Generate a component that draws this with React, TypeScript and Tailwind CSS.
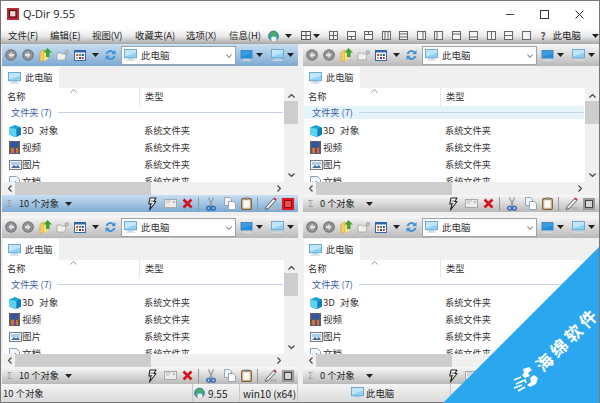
import React from "react";

const cjk = { fontFamily: '"Noto Sans CJK SC", "Noto Sans", sans-serif' };

function Svg({ w = 14, h = 14, vb = "0 0 14 14", children }: { w?: number; h?: number; vb?: string; children: React.ReactNode }) {
  return (
    <svg width={w} height={h} viewBox={vb} className="shrink-0 block">
      {children}
    </svg>
  );
}

const Caret = ({ c = "#222" }: { c?: string }) => (
  <Svg w={7} h={4} vb="0 0 7 4">
    <path d="M0 0h7L3.5 4z" fill={c} />
  </Svg>
);

const Monitor = ({ w = 14, h = 13, screen = "#2a9be0", light = false }: { w?: number; h?: number; screen?: string; light?: boolean }) => (
  <Svg w={w} h={h} vb="0 0 14 13">
    <rect x="0.5" y="0.5" width="13" height="9" fill={light ? "#8fd0f5" : screen} stroke={light ? "#6aa6cc" : "#3b7fb6"} />
    <path d="M1 1h12v3L1 8z" fill="#fff" opacity={light ? 0.45 : 0.12} />
    <rect x="4" y="10" width="6" height="1.5" fill="#a9c6da" />
    <rect x="2" y="11.4" width="10" height="1.4" fill="#d5dfe7" />
  </Svg>
);

const Round = ({ dir }: { dir: "l" | "r" }) => (
  <Svg w={12} h={12} vb="0 0 12 12">
    <circle cx="6" cy="6" r="5.8" fill="#6d6f73" />
    <circle cx="6" cy="6" r="4.8" fill="#909296" />
    <path d={dir === "l" ? "M6.6 2.8 3.4 6l3.2 3.2V7.2H9V4.8H6.6z" : "M5.4 2.8 8.6 6 5.4 9.2V7.2H3V4.8h2.4z"} fill="#e4e4e4" />
  </Svg>
);

const UpFolder = () => (
  <Svg w={13} h={14} vb="0 0 13 14">
    <path d="M1 4l4-2v10l-4 2z" fill="#f3cf5e" stroke="#c99c2d" strokeWidth=".6" />
    <path d="M5 3h4v8l-4 2z" fill="#f8e08a" />
    <path d="M8.5 0 13 4.5h-2.5V9H7V4.5H4.5z" fill="#45a12f" />
  </Svg>
);

const FolderPin = () => (
  <Svg w={13} h={11} vb="0 0 13 11">
    <path d="M1 3h4l1 1h4l-1 6H1z" fill="#f1f1ec" stroke="#9c9c94" strokeWidth=".7" />
    <circle cx="10.8" cy="2.2" r="1.6" fill="#d0d0d0" stroke="#777" strokeWidth=".6" />
  </Svg>
);

const ViewIcon = () => (
  <Svg w={12} h={11} vb="0 0 12 11">
    <rect x=".5" y=".5" width="11" height="10" fill="#fff" stroke="#2f66ad" />
    <rect x=".5" y=".5" width="11" height="2" fill="#2f66ad" />
    <rect x="2.2" y="4" width="2" height="2" fill="#d33" />
    <rect x="5" y="4" width="2" height="2" fill="#3a3" />
    <rect x="7.8" y="4" width="2" height="2" fill="#24b" />
    <rect x="2.2" y="7" width="2" height="2" fill="#e9a51f" />
    <rect x="5" y="7" width="2" height="2" fill="#24b" />
    <rect x="7.8" y="7" width="2" height="2" fill="#d33" />
  </Svg>
);

const Refresh = () => (
  <Svg w={13} h={12} vb="0 0 13 12">
    <path d="M1.5 5A5 5 0 0 1 10 2.5L11.5 1v4.3H7.3l1.3-1.4A3 3 0 0 0 3.7 5z" fill="#3f93d8" />
    <path d="M11.5 7A5 5 0 0 1 3 9.5L1.5 11V6.7h4.2L4.4 8.1A3 3 0 0 0 9.3 7z" fill="#3f93d8" />
  </Svg>
);

const Globe = ({ s = 11 }: { s?: number }) => (
  <Svg w={s} h={s + 1} vb="0 0 11 12">
    <circle cx="5.5" cy="6" r="5" fill="#3e9fb8" stroke="#38606c" strokeWidth=".6" />
    <path d="M3 2.4 7 1.8 8 4.5 5.8 6 6.4 8 4.6 8.6 2.6 5.2z" fill="#4caf50" />
    <ellipse cx="5.8" cy="9" rx="2.6" ry="2.4" fill="#f4f4f4" />
  </Svg>
);

const Bolt = () => (
  <Svg w={10} h={14} vb="0 0 10 14">
    <path d="M3 1h6L6.8 4.5H9L2.5 13l1.6-6H1.8z" fill="#fff" stroke="#222" strokeWidth="1.1" strokeLinejoin="round" />
    <path d="M3.4 4h3M3 6.3h2.5" stroke="#222" strokeWidth=".7" />
  </Svg>
);

const Mail = () => (
  <Svg w={13} h={9} vb="0 0 13 9">
    <rect x=".5" y=".5" width="12" height="8" fill="#ececec" stroke="#a8a8a8" />
    <path d="M2 2h5M2 4h3" stroke="#bdbdbd" />
    <rect x="9" y="2" width="2" height="2" fill="#b5b5b5" />
  </Svg>
);

const RedX = () => (
  <Svg w={11} h={11} vb="0 0 11 11">
    <path d="M1.5 1.5l8 8M9.5 1.5l-8 8" stroke="#d8121b" strokeWidth="2.6" />
  </Svg>
);

const Scissors = () => (
  <Svg w={10} h={14} vb="0 0 10 14">
    <path d="M7.5 .5 3.6 9.4M2.5.5l3.9 8.9" stroke="#8f98a2" strokeWidth="1.2" />
    <circle cx="2.6" cy="11.3" r="1.9" fill="none" stroke="#2265b8" strokeWidth="1.3" />
    <circle cx="7.4" cy="11.3" r="1.9" fill="none" stroke="#2265b8" strokeWidth="1.3" />
  </Svg>
);

const Copy = () => (
  <Svg w={12} h={13} vb="0 0 12 13">
    <path d="M.5.5h5l2 2v6h-7z" fill="#f0f4f8" stroke="#96a3b0" />
    <path d="M4.5 4.5h5l2 2v6h-7z" fill="#fafcfe" stroke="#96a3b0" />
  </Svg>
);

const Paste = () => (
  <Svg w={11} h={13} vb="0 0 11 13">
    <rect x=".7" y="1.7" width="9.6" height="10.6" rx="1" fill="#e2d4b4" stroke="#85572a" strokeWidth="1.2" />
    <rect x="2.6" y="3.5" width="5.8" height="7" fill="#fbfbfb" />
    <rect x="3.2" y=".4" width="4.6" height="2.4" fill="#8a8a8a" />
  </Svg>
);

const Pen = () => (
  <Svg w={14} h={13} vb="0 0 14 13">
    <path d="M2 10 9.5 1.6l2.2 2L4.2 11.6 1.4 12.4z" fill="#f2f2f2" stroke="#4a4a58" strokeWidth=".9" />
    <path d="M9.5 1.6l2.2 2 1-1.2-2.1-1.9z" fill="#d3242f" />
    <rect x="6" y="10" width="7" height="2.6" fill="#b5b5b5" />
  </Svg>
);

const Square = ({ active }: { active: boolean }) =>
  active ? (
    <Svg w={12} h={12} vb="0 0 12 12">
      <rect width="12" height="12" fill="#e8161e" />
      <rect x="2.5" y="2.5" width="7" height="7" fill="#ee4a4a" stroke="#8c1015" />
    </Svg>
  ) : (
    <Svg w={12} h={12} vb="0 0 12 12">
      <rect width="12" height="12" fill="#9a9a9a" />
      <rect x="2.5" y="2.5" width="7" height="7" fill="#d6d6d6" stroke="#444" />
    </Svg>
  );

const Sep = () => <span className="block w-px h-[14px] bg-[#8c9aa6] shrink-0" />;

const Cube = () => (
  <Svg w={12} h={12} vb="0 0 12 12">
    <path d="M0 2.6 6 0l6 2.6v7L6 12 0 9.6z" fill="#16a5d8" />
    <path d="M0 2.6 7.5 4v8L0 9.6z" fill="#5ed2ef" />
    <path d="M7.5 4 12 2.6v7L7.5 12z" fill="#0f7eb6" />
  </Svg>
);
const Film = () => (
  <Svg w={11} h={13} vb="0 0 11 13">
    <rect width="11" height="13" fill="#5d5d66" />
    <rect x="2" y="1" width="7" height="5" fill="#2f55a8" />
    <rect x="2" y="7" width="7" height="5" fill="#c9792e" />
    <rect x="5" y="7" width="2" height="5" fill="#7a3c9a" />
  </Svg>
);
const Pic = () => (
  <Svg w={13} h={10} vb="0 0 13 10">
    <rect x=".5" y=".5" width="12" height="9" fill="#eef3f8" stroke="#77808a" />
    <rect x="2" y="2" width="9" height="3" fill="#a9cdea" />
    <path d="M2 8l3-3 2 1.5L9 5l2 3z" fill="#4a6f94" />
  </Svg>
);
const Doc = () => (
  <Svg w={11} h={12} vb="0 0 11 12">
    <path d="M.5.5h7l3 3v8H.5z" fill="#f3f7fb" stroke="#8aa3bb" />
    <path d="M2.5 5l2 2 2-2.5 2 3.5h-6z" fill="#5f9bd0" />
  </Svg>
);

function Row({ icon, name }: { icon: React.ReactNode; name: string }) {
  return (
    <div className="flex items-center h-[17px] shrink-0">
      <span className="w-[19px] pl-[6px] flex justify-start shrink-0">{icon}</span>
      <span className="w-[118px] shrink-0 whitespace-nowrap text-[9.6px] [word-spacing:3px]">{name}</span>
      <span className="whitespace-nowrap pl-[4px]">系统文件夹</span>
    </div>
  );
}

function Pane({ active, count, groupHi }: { active?: boolean; count: string; groupHi?: boolean }) {
  const bar = active
    ? "bg-[linear-gradient(to_bottom,#c9dff2,#7ca9d2)]"
    : "bg-[linear-gradient(to_bottom,#f8f8f8,#b9b9b9)]";
  return (
    <div className="flex flex-col h-[168px] min-w-0 text-[#333] text-[9.2px]" style={cjk}>
      <div className={`h-[22px] shrink-0 flex items-center ${bar}`}>
        <span className="ml-[3px]"><Round dir="l" /></span>
        <span className="ml-[5px]"><Round dir="r" /></span>
        <span className="ml-[5px]"><UpFolder /></span>
        <span className="ml-[4px]"><FolderPin /></span>
        <span className="ml-[5px]"><ViewIcon /></span>
        <span className="ml-[6px]"><Caret /></span>
        <span className="ml-[5px]"><Refresh /></span>
        <div className="ml-[4px] w-[115px] h-[19px] bg-white border border-[#9aa2aa] flex items-center pl-[2px] relative shrink-0">
          <Monitor w={13} h={12} light />
          <span className="ml-[4px] text-[9.5px]">此电脑</span>
          <svg width="6" height="4" viewBox="0 0 6 4" className="absolute right-[3px] top-[7px]">
            <path d="M.5.5 3 3.5 5.5.5" fill="none" stroke="#666" />
          </svg>
        </div>
        <span className="ml-[4px]"><Monitor w={13} h={11} screen="#1f8fe0" /></span>
        <span className="ml-[3px]"><Caret /></span>
        <span className="ml-[8px]"><Monitor w={13} h={12} light /></span>
        <span className="ml-[3px]"><Caret /></span>
      </div>
      <div className="h-[22px] shrink-0 bg-[#f0f0f0] flex items-end pl-[1px]">
        <div className="w-[56px] h-[21px] bg-white flex items-center pl-[5px]">
          <Monitor w={13} h={12} light />
          <span className="ml-[4px] text-[9.2px]">此电脑</span>
        </div>
      </div>
      <div className="flex-1 min-h-0 flex bg-white ml-[1px]">
        <div className="flex-1 min-w-0 overflow-hidden flex flex-col">
          <div className="h-[18px] shrink-0 flex items-center relative">
            <span className="w-[137px] pl-[4px] h-full flex items-center border-r border-[#e5e5e5] shrink-0">名称</span>
            <span className="pl-[5px]">类型</span>
            <svg width="7" height="4" viewBox="0 0 7 4" className="absolute left-[67px] top-[1px]">
              <path d="M.5 3.5 3.5.5l3 3" fill="none" stroke="#999" />
            </svg>
          </div>
          <div className={`h-[13px] shrink-0 flex items-center pl-[8px] mr-[1px] ${groupHi ? "bg-[#e5f3fb]" : ""}`}>
            <span className="text-[#3a5fa8] whitespace-nowrap">文件夹 (7)</span>
            <span className="flex-1 h-px bg-[#c5d2ea] ml-[6px]" />
          </div>
          <div className="h-[3px] shrink-0" />
          <Row icon={<Cube />} name="3D 对象" />
          <Row icon={<Film />} name="视频" />
          <Row icon={<Pic />} name="图片" />
          <Row icon={<Doc />} name="文档" />
        </div>
        <div className="w-[14px] shrink-0 bg-[#f0f0f0] flex flex-col items-center">
          <svg width="7" height="4" viewBox="0 0 7 4" className="mt-[6px]">
            <path d="M.5 3.5 3.5.5l3 3" fill="none" stroke="#444" strokeWidth="1.2" />
          </svg>
          <div className="w-full h-[23px] bg-[#cdcdcd] mt-[3px]" />
          <svg width="7" height="4" viewBox="0 0 7 4" className="mt-auto mb-[5px]">
            <path d="M.5.5 3.5 3.5l3-3" fill="none" stroke="#444" strokeWidth="1.2" />
          </svg>
        </div>
      </div>
      <div className="h-[13px] shrink-0 bg-[#f0f0f0] flex items-center ml-[1px]">
        <svg width="4" height="7" viewBox="0 0 4 7" className="ml-[5px]">
          <path d="M3.5.5.5 3.5l3 3" fill="none" stroke="#444" strokeWidth="1.2" />
        </svg>
        <div className="w-[136px] h-full bg-[#cdcdcd] ml-[3px]" />
        <svg width="4" height="7" viewBox="0 0 4 7" className="ml-[126px]">
          <path d="M.5.5l3 3-3 3" fill="none" stroke="#444" strokeWidth="1.2" />
        </svg>
      </div>
      <div className={`h-[17px] shrink-0 flex items-center ${bar}`}>
        <span className="ml-[5px] w-[7px] text-[#9a9a9a] text-[9px]">Σ</span>
        <span className="ml-[5px] w-[46px] whitespace-nowrap text-[#222]">{count}</span>
        <Caret />
        <span className="ml-auto"><Bolt /></span>
        <span className="ml-[7px]"><Mail /></span>
        <span className="ml-[5px]"><RedX /></span>
        <span className="ml-[5px]"><Sep /></span>
        <span className="ml-[7px]"><Scissors /></span>
        <span className="ml-[8px]"><Copy /></span>
        <span className="ml-[5px]"><Paste /></span>
        <span className="ml-[5px]"><Sep /></span>
        <span className="ml-[6px]"><Pen /></span>
        <span className="ml-[4px] mr-[4px]"><Square active={!!active} /></span>
      </div>
    </div>
  );
}

const layouts = [
  "M.5 4.5h8M4.5.5v8",
  "M.5 5.5h8M4.5 5.5v3",
  "M.5 3.5h8M4.5.5v3",
  "M3 .5v8M6 .5v8",
  "M.5 3h8M.5 6h8",
  "M6 .5v8",
  "M3 .5v8",
  "M.5 3h8",
  "M.5 6h8",
  "M4.5.5v8",
  "M.5 4.5h8",
  "",
];
const LayoutBtn = ({ d }: { d: string }) => (
  <Svg w={9} h={9} vb="0 0 9 9">
    <rect x=".5" y=".5" width="8" height="8" fill="#f4f4f4" stroke="#666" />
    {d && <path d={d} stroke="#666" />}
  </Svg>
);

export default function App() {
  const menus: [string, number][] = [
    ["文件(F)", 42],
    ["编辑(E)", 42],
    ["视图(V)", 43],
    ["收藏夹(A)", 51],
    ["选项(X)", 43],
    ["信息(H)", 39],
  ];
  return (
    <div className="w-[600px] h-[403px] relative overflow-hidden flex flex-col bg-[#f0f0f0] border-x border-t border-[#777]">
      <div className="h-[26px] shrink-0 bg-white flex items-center">
        <span className="ml-[6px]">
          <Svg w={12} h={12} vb="0 0 12 12">
            <rect width="12" height="12" fill="#c22a37" />
            <rect x="2.5" y="2.5" width="6.5" height="6.5" fill="#f3d7da" stroke="#4a1015" strokeWidth="1.2" />
          </Svg>
        </span>
        <span className="ml-[4px] text-[11px] text-[#222]" style={{ fontFamily: '"Open Sans", sans-serif' }}>Q-Dir 9.55</span>
        <div className="ml-auto flex items-center">
          <span className="w-[8px] h-px bg-[#444] mr-[26px]" />
          <span className="w-[9px] h-[9px] border border-[#333] mr-[26px]" />
          <svg width="9" height="9" viewBox="0 0 9 9" className="mr-[15px]">
            <path d="M.5.5l8 8M8.5.5l-8 8" stroke="#333" />
          </svg>
        </div>
      </div>
      <div className="h-[17px] shrink-0 flex items-center bg-[linear-gradient(to_bottom,#ffffff_10%,#e8e8e8_55%,#a6a6a6)] text-[9.4px] text-[#222]" style={cjk}>
        <div className="flex pl-[7px]">
          {menus.map(([m, w]) => (
            <span key={m} className="whitespace-nowrap" style={{ width: w }}>{m}</span>
          ))}
        </div>
        <Globe />
        <span className="ml-[6px]"><Caret /></span>
        <span className="ml-[9px]">
          <Svg w={10} h={9} vb="0 0 10 9">
            <rect x=".5" y=".5" width="9" height="8" fill="#f4f4f4" stroke="#555" />
            <path d="M.5 4.5h9M5 .5v8" stroke="#555" />
          </Svg>
        </span>
        <span className="ml-[2px]"><Caret /></span>
        <div className="flex ml-[9px] gap-[8.5px]">
          {layouts.map((d, k) => (
            <LayoutBtn key={k} d={d} />
          ))}
        </div>
        <span className="ml-[10px] text-[#555] font-bold text-[10px] leading-none">?</span>
        <span className="ml-[7px] whitespace-nowrap">此电脑</span>
        <span className="ml-[11px]"><Caret /></span>
      </div>
      <div className="grid grid-cols-[296px_296px] gap-x-[5px] gap-y-[4px] pl-[1px] shrink-0">
        <Pane active count="10 个对象" />
        <Pane count="0 个对象" groupHi />
        <Pane count="10 个对象" />
        <Pane count="0 个对象" />
      </div>
      <div className="flex-1 min-h-0 flex items-center text-[9.4px] text-[#222] bg-[linear-gradient(to_bottom,#f4f4f4,#dadada)] border-b border-[#777]" style={cjk}>
        <span className="w-[192px] pl-[2px] h-full flex items-center border-r border-[#c8c8c8]">10 个对象</span>
        <span className="w-[47px] pl-[1px] h-full flex items-center border-r border-[#c8c8c8]">
          <Globe /><span className="ml-[3px] text-[10px]">9.55</span>
        </span>
        <span className="w-[58px] pl-[3px] h-full flex items-center border-r border-[#c8c8c8] text-[10px] whitespace-nowrap">win10 (x64)</span>
        <span className="w-[153px] pl-[53px] h-full flex items-center border-r border-[#c8c8c8]">
          <Monitor w={13} h={12} light /><span className="ml-[2px]">此电脑</span>
        </span>
      </div>

      <div className="absolute right-[-1px] bottom-0 w-[157px] h-[157px] bg-[#2ba7ef] [clip-path:polygon(100%_0,100%_100%,0_100%)]" />
      <div className="absolute left-[521px] top-[326px] w-[90px] text-center text-white font-bold text-[17px] tracking-[3.5px] whitespace-nowrap rotate-[-45deg] leading-[24px]" style={cjk}>
        海绵软件
      </div>
      <svg width="28" height="27" viewBox="0 0 28 27" className="absolute left-[511px] top-[365px]">
        <path d="M11 3l6-2 3 3-4 3 2 3-5 2-3-3 2-2z" fill="#fff" />
        <path d="M18 12l4-3 4 3-2 6-6 3-3-2 4-3z" fill="#fff" />
        <g fill="none" stroke="#fff" strokeWidth="1.8">
          <path d="M2 14l7-3M4 18l9-4 1 3M2 22l8-3M6 25l7-4" />
        </g>
      </svg>
    </div>
  );
}
